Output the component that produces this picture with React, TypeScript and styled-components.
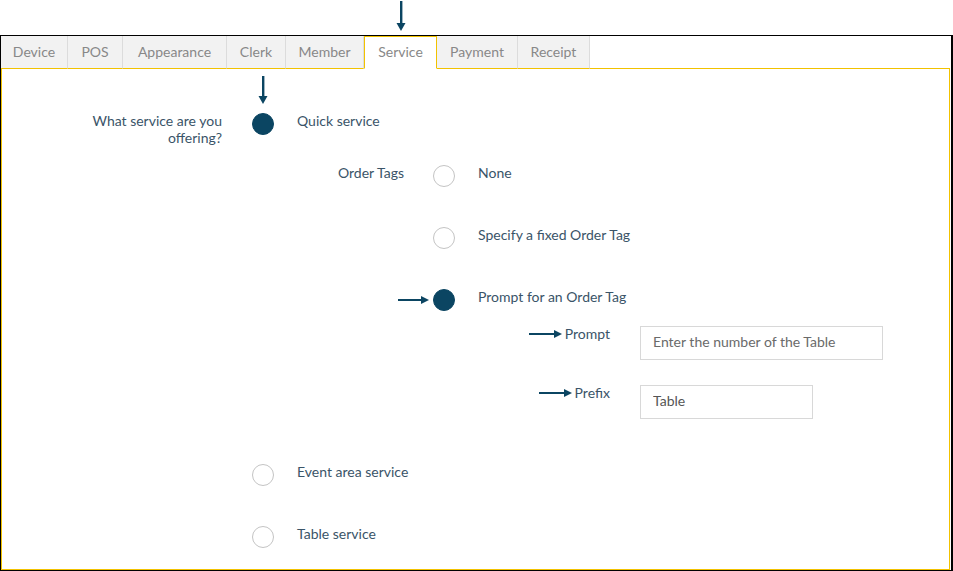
import React from 'react'
import styled, { createGlobalStyle } from 'styled-components'

const colors = {
  navy: '#0b4562',
  text: '#3a5468',
  tabText: '#888888',
  yellow: '#f2c200',
  tabBg: '#f2f2f2',
  tabLine: '#dcdcdc',
  radioLine: '#c4c4c4',
  inputLine: '#d8d8d8',
}

const GlobalStyle = createGlobalStyle`
  html, body {
    margin: 0;
    padding: 0;
    background: #fff;
  }
  body {
    font-family: Lato, "Noto Sans", sans-serif;
    font-size: 14px;
    color: ${colors.text};
  }
`

const Page = styled.div`
  width: 953px;
  height: 571px;
  padding-top: 35px;
  box-sizing: border-box;
`

const Frame = styled.div`
  height: 100%;
  box-sizing: border-box;
  border: 1px solid #000;
  border-right-width: 2px;
  display: flex;
  flex-direction: column;
`

const TabBar = styled.div`
  display: flex;
  height: 33px;
  box-sizing: border-box;
  background: ${colors.tabBg};
  margin-right: 1px;
`

const TabFill = styled.div`
  flex: 1;
  background: #fff;
  border-bottom: 1px solid ${colors.yellow};
`

const Tab = styled.div<{ $active?: boolean; $w: number }>`
  position: relative;
  width: ${p => p.$w}px;
  box-sizing: border-box;
  display: flex;
  align-items: center;
  justify-content: center;
  padding-bottom: 1px;
  font-size: 14px;
  color: ${colors.tabText};
  border-right: 1px solid ${colors.tabLine};
  border-bottom: 1px solid ${colors.yellow};
  ${p => p.$active && `
    background: #fff;
    border: 1px solid ${colors.yellow};
    border-bottom-color: #fff;
    padding-bottom: 3px;
  `}
`

const Panel = styled.div`
  flex: 1;
  border: 1px solid ${colors.yellow};
  border-top: none;
  margin-right: 1px;
  padding-top: 42px;
`

const Question = styled.div<{ $labelWidth: number; $gap: number }>`
  display: grid;
  grid-template-columns: ${p => p.$labelWidth}px 1fr;
  column-gap: ${p => p.$gap}px;
  align-items: start;
`

const QuestionLabel = styled.div<{ $lh?: number }>`
  text-align: right;
  line-height: ${p => p.$lh ?? 20}px;
  padding-top: ${p => (p.$lh ? 1 : 0)}px;
`

const Options = styled.div<{ $gap: number }>`
  display: flex;
  flex-direction: column;
  gap: ${p => p.$gap}px;
`

const Option = styled.div`
  display: flex;
  align-items: flex-start;
  gap: 23px;
`

const Radio = styled.span<{ $on?: boolean }>`
  position: relative;
  flex: none;
  width: 22px;
  height: 22px;
  margin-top: 2px;
  box-sizing: border-box;
  border-radius: 50%;
  border: 1px solid ${p => (p.$on ? colors.navy : colors.radioLine)};
  background: ${p => (p.$on ? colors.navy : '#fff')};
`

const OptionBody = styled.div`
  display: flex;
  flex-direction: column;
`

const OptionText = styled.div`
  line-height: 20px;
`

const Nested = styled.div<{ $mt: number; $mb?: number }>`
  margin-top: ${p => p.$mt}px;
  margin-bottom: ${p => p.$mb ?? 0}px;
`

const Fields = styled.div`
  display: flex;
  flex-direction: column;
  gap: 23px;
`

const FieldRow = styled.div`
  display: grid;
  grid-template-columns: 132px auto;
  column-gap: 30px;
  align-items: start;
`

const FieldLabel = styled.div`
  display: flex;
  align-items: center;
  justify-content: flex-end;
  gap: 3px;
  line-height: 20px;
`

const TextInput = styled.input<{ $w: number }>`
  width: ${p => p.$w}px;
  height: 34px;
  margin: 2px 0 0;
  box-sizing: border-box;
  border: 1px solid ${colors.inputLine};
  border-radius: 0;
  padding: 0 12px 3px;
  font-family: Lato, "Noto Sans", sans-serif;
  font-size: 14px;
  color: #555;
  outline: none;
  &::placeholder {
    color: #6a6a6a;
  }
`

const DownMark = styled.svg<{ $bottom: number }>`
  position: absolute;
  left: 50%;
  bottom: calc(100% + ${p => p.$bottom}px);
  transform: translateX(-50%);
`

const SideMark = styled.svg`
  position: absolute;
  right: calc(100% + 5px);
  top: 50%;
  transform: translateY(-50%);
`

const DownArrow = ({ bottom, height }: { bottom: number; height: number }) => (
  <DownMark $bottom={bottom} width="10" height={height} viewBox={`0 0 10 ${height}`}>
    <rect x="4" y="0" width="2.4" height={height - 7} fill={colors.navy} />
    <polygon points={`0.5,${height - 8} 9.5,${height - 8} 5,${height}`} fill={colors.navy} />
  </DownMark>
)

const RightArrow = () => (
  <svg width="33" height="8" viewBox="0 0 33 8">
    <rect x="0" y="3" width="26" height="2" fill={colors.navy} />
    <polygon points="25,0 33,4 25,8" fill={colors.navy} />
  </svg>
)

const tabs: [string, number][] = [
  ['Device', 67],
  ['POS', 55],
  ['Appearance', 104],
  ['Clerk', 59],
  ['Member', 78],
  ['Service', 73],
  ['Payment', 81],
  ['Receipt', 72],
]

export default function App() {
  return (
    <Page>
      <GlobalStyle />
      <Frame>
        <TabBar>
          {tabs.map(([name, w]) => (
            <Tab key={name} $w={w} $active={name === 'Service'}>
              {name === 'Service' && <DownArrow bottom={6} height={30} />}
              {name}
            </Tab>
          ))}
          <TabFill />
        </TabBar>
        <Panel>
          <Question $labelWidth={220} $gap={30}>
            <QuestionLabel $lh={17}>
              What service are you
              <br />
              offering?
            </QuestionLabel>
            <Options $gap={38}>
              <Option>
                <Radio $on>
                  <DownArrow bottom={10} height={28} />
                </Radio>
                <OptionBody>
                  <OptionText>Quick service</OptionText>
                  <Nested $mt={32} $mb={5}>
                    <Question $labelWidth={107} $gap={29}>
                      <QuestionLabel>Order Tags</QuestionLabel>
                      <Options $gap={38}>
                        <Option>
                          <Radio />
                          <OptionText>None</OptionText>
                        </Option>
                        <Option>
                          <Radio />
                          <OptionText>Specify a fixed Order Tag</OptionText>
                        </Option>
                        <Option>
                          <Radio $on>
                            <SideMark width="31" height="8" viewBox="0 0 31 8">
                              <rect x="0" y="3" width="24" height="2" fill={colors.navy} />
                              <polygon points="23,0 31,4 23,8" fill={colors.navy} />
                            </SideMark>
                          </Radio>
                          <OptionBody>
                            <OptionText>Prompt for an Order Tag</OptionText>
                            <Nested $mt={17}>
                              <Fields>
                                <FieldRow>
                                  <FieldLabel>
                                    <RightArrow />
                                    Prompt
                                  </FieldLabel>
                                  <TextInput $w={243} placeholder="Enter the number of the Table" readOnly />
                                </FieldRow>
                                <FieldRow>
                                  <FieldLabel>
                                    <RightArrow />
                                    Prefix
                                  </FieldLabel>
                                  <TextInput $w={173} defaultValue="Table" readOnly />
                                </FieldRow>
                              </Fields>
                            </Nested>
                          </OptionBody>
                        </Option>
                      </Options>
                    </Question>
                  </Nested>
                </OptionBody>
              </Option>
              <Option>
                <Radio />
                <OptionText>Event area service</OptionText>
              </Option>
              <Option>
                <Radio />
                <OptionText>Table service</OptionText>
              </Option>
            </Options>
          </Question>
        </Panel>
      </Frame>
    </Page>
  )
}
